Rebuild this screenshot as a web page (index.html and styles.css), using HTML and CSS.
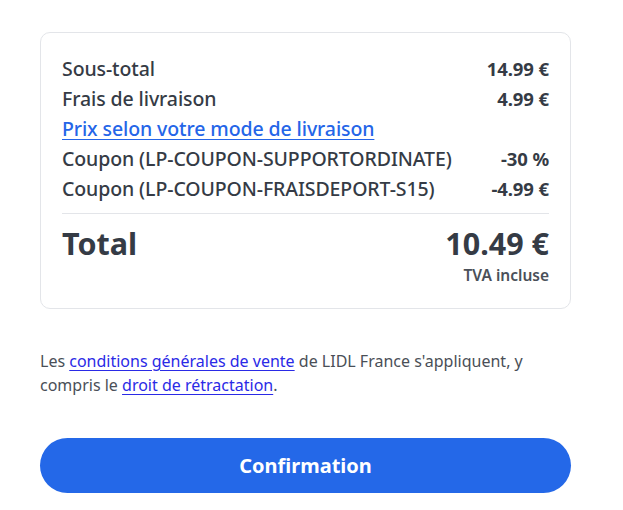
FILE: index.html
```html
<!DOCTYPE html>
<html lang="fr">
<head>
<meta charset="utf-8">
<link rel="stylesheet" href="styles.css">
</head>
<body>
<main class="page">
  <section class="summary">
    <div class="row"><span>Sous-total</span><span class="amount">14.99 €</span></div>
    <div class="row"><span>Frais de livraison</span><span class="amount">4.99 €</span></div>
    <div class="row"><a class="link" href="#">Prix selon votre mode de livraison</a></div>
    <div class="row"><span>Coupon (LP-COUPON-SUPPORTORDINATE)</span><span class="amount">-30 %</span></div>
    <div class="row"><span>Coupon (LP-COUPON-FRAISDEPORT-S15)</span><span class="amount">-4.99 €</span></div>
    <hr class="sep">
    <div class="total-row"><span>Total</span><span>10.49 €</span></div>
    <div class="tva">TVA incluse</div>
  </section>
  <p class="legal">Les <a href="#">conditions générales de vente</a> de LIDL France s'appliquent, y compris le <a href="#">droit de rétractation</a>.</p>
  <button class="confirm" type="button">Confirmation</button>
</main>
</body>
</html>
```
FILE: styles.css
```css
html, body {
  margin: 0;
  background: #ffffff;
}
body {
  font-family: "Noto Sans", "Open Sans", sans-serif;
  color: #353b45;
}
.page {
  width: 531px;
  padding: 32px 0 0 40px;
  display: flex;
  flex-direction: column;
}
.summary {
  border: 1px solid #e3e5e9;
  border-radius: 10px;
  padding: 20px 21px 22px 21px;
  display: flex;
  flex-direction: column;
}
.row {
  display: flex;
  justify-content: space-between;
  align-items: center;
  height: 30px;
  font-size: 19.5px;
  font-weight: 500;
  letter-spacing: -0.1px;
}
.amount {
  font-size: 18.5px;
  font-weight: 700;
}
.link {
  color: #2465e8;
  text-decoration: underline;
  text-decoration-thickness: 1px;
  text-underline-offset: 3px;
}
.sep {
  border: 0;
  border-top: 1px solid #e3e5e9;
  margin: 10px 0 0;
}
.total-row {
  display: flex;
  justify-content: space-between;
  align-items: center;
  height: 42px;
  margin-top: 8px;
  font-size: 30.5px;
  font-weight: 700;
}
.tva {
  text-align: right;
  font-size: 15.5px;
  font-weight: 600;
  color: #4a5059;
  line-height: 22px;
  margin-top: 0;
}
.legal {
  margin: 40px 0 0;
  font-size: 16px;
  line-height: 24px;
  color: #4a4f57;
}
.legal a {
  color: #2a2ae6;
  text-underline-offset: 3px;
}
.confirm {
  margin-top: 41px;
  height: 55px;
  border: 0;
  border-radius: 28px;
  background: #2468e8;
  color: #ffffff;
  font-family: inherit;
  font-size: 20px;
  font-weight: 700;
}
```
